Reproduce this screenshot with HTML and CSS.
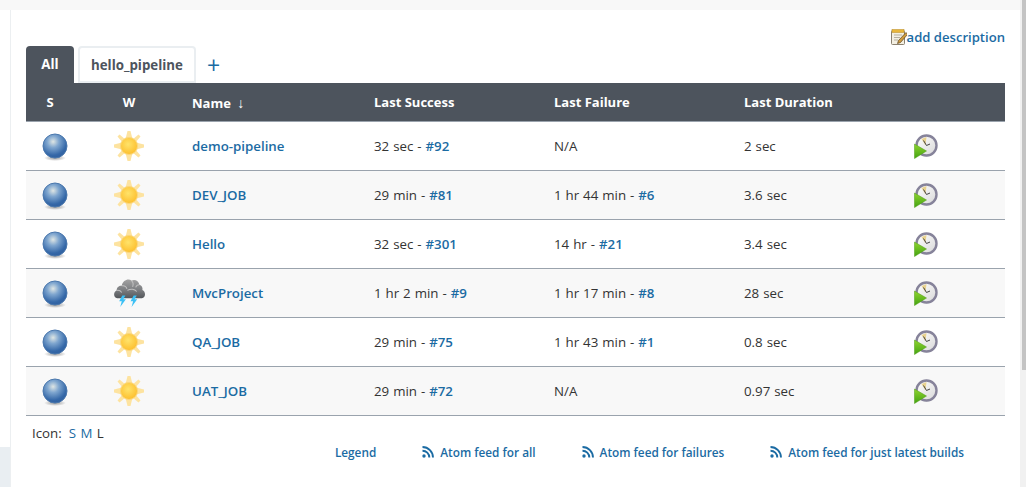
FILE: index.html
```html
<!DOCTYPE html>
<html>
<head>
	<title>Dashboard</title>
	<meta charset="utf-8"/>
	<link rel="stylesheet" href="styles.css">
</head>
<body>
	<svg class="defs" width="0" height="0">
		<defs>
			<radialGradient id="ball" cx="0.42" cy="0.32" r="0.7">
				<stop offset="0" stop-color="#dfe6e4"/>
				<stop offset="0.35" stop-color="#7fa6cf"/>
				<stop offset="0.8" stop-color="#3568a8"/>
				<stop offset="1" stop-color="#2f5f9e"/>
			</radialGradient>
			<radialGradient id="shade" cx="0.5" cy="0.5" r="0.5">
				<stop offset="0" stop-color="#555" stop-opacity="0.6"/>
				<stop offset="1" stop-color="#555" stop-opacity="0"/>
			</radialGradient>
			<radialGradient id="sunball" cx="0.45" cy="0.4" r="0.6">
				<stop offset="0" stop-color="#ffe36a"/>
				<stop offset="1" stop-color="#fdbf2e"/>
			</radialGradient>
			<linearGradient id="cloud" x1="0" y1="0" x2="0" y2="1">
				<stop offset="0" stop-color="#a2a2a2"/>
				<stop offset="0.55" stop-color="#7c7e81"/>
				<stop offset="1" stop-color="#54575b"/>
			</linearGradient>
			<linearGradient id="clockface" x1="0" y1="0" x2="1" y2="1">
				<stop offset="0" stop-color="#fff"/>
				<stop offset="1" stop-color="#d8d8d8"/>
			</linearGradient>
			<linearGradient id="arrowfill" x1="0" y1="0" x2="0" y2="1">
				<stop offset="0" stop-color="#8fd42e"/>
				<stop offset="1" stop-color="#43a312"/>
			</linearGradient>
			<symbol id="blue" viewBox="0 0 26 28">
				<ellipse cx="13" cy="25" rx="11" ry="3" fill="url(#shade)"/>
				<circle cx="13" cy="13" r="12" fill="url(#ball)" stroke="#4b78ad" stroke-width="1"/>
			</symbol>
			<symbol id="sun" viewBox="0 0 30 30">
				<g fill="#fde3a0">
					<path d="M13.500 0h3l2 8h-7z"/>
					<path d="M13.500 30h3l2-8h-7z"/>
					<path d="M0 13.500v3l8 2v-7z"/>
					<path d="M30 13.500v3l-8 2v-7z"/>
					<path d="M3.500 5.500l2-2 6 5-3 3z"/>
					<path d="M26.500 5.500l-2-2-6 5 3 3z"/>
					<path d="M3.500 24.500l2 2 6-5-3-3z"/>
					<path d="M26.500 24.500l-2 2-6-5 3-3z"/>
				</g>
				<circle cx="15" cy="15" r="8.500" fill="url(#sunball)" stroke="#fbd77c" stroke-width="1"/>
			</symbol>
			<symbol id="storm" viewBox="0 0 32 30">
				<path d="M4 20.500c-3.500-.5-4-6-.5-7.500 0-3.500 3-5 5-4.500C9.500 3 15 1 18 3.500c3-1.500 7 0 7.500 4 2.500.5 3.500 3 3 5 3.500 1.500 3.500 7.500-.5 8z" fill="url(#cloud)"/>
				<path d="M8.500 8.500c2.500-.5 4.500 1 5 3M18 3.500c1.500 1.500 2 3.500 1 6M25.500 7.500c-1.500 0-3 1-3.500 2.500M3.500 13c2-.5 4 .5 5 2M14 13c3-2 7-1.500 9 1" fill="none" stroke="#c0c0c0" stroke-width="1"/>
				<path d="M9 18l-3 5.500h2.500l-1.500 5.500 5.500-7.500h-2.500l2-3.500z" fill="#3cc0f5"/>
				<path d="M20 18l-3 5.500h2.500l-1.500 5.500 5.500-7.500h-2.500l2-3.500z" fill="#3cc0f5"/>
			</symbol>
			<symbol id="clock" viewBox="0 0 24 25">
				<circle cx="12.500" cy="12" r="10.500" fill="#000" opacity="0.15"/>
				<circle cx="12.500" cy="11.500" r="10" fill="url(#clockface)" stroke="#86839a" stroke-width="2.400"/>
				<path d="M12.500 3l-5 2 4 6.500z" fill="#e9d390"/>
				<path d="M12.500 11.500l-3-5M12.500 11.500l3.500-1.500" fill="none" stroke="#444" stroke-width="1"/>
				<path d="M0.500 10v14.500l12-7.500z" fill="url(#arrowfill)" stroke="#4d9a12" stroke-width="0.500"/>
			</symbol>
			<symbol id="note" viewBox="0 0 16 16">
				<rect x="0.500" y="1.500" width="13" height="14" rx="1" fill="#f3efe2" stroke="#8a8170"/>
				<rect x="1" y="0.500" width="12" height="3" fill="#e8b63a" stroke="#b98a20" stroke-width="0.500"/>
				<path d="M3 6h8M3 8.500h6M3 11h4" stroke="#b5b0a0" stroke-width="1"/>
				<path d="M15 3.500l-7.500 8-1 3 3-1 7-8z" fill="#cf9a3c" stroke="#5a4420" stroke-width="0.700"/>
			</symbol>
			<symbol id="rss" viewBox="0 0 12 12">
				<circle cx="2" cy="10" r="1.700" fill="currentColor"/>
				<path d="M0.500 4.700a6.800 6.800 0 0 1 6.800 6.800" fill="none" stroke="currentColor" stroke-width="1.900"/>
				<path d="M0.500 1a10.500 10.500 0 0 1 10.500 10.500" fill="none" stroke="currentColor" stroke-width="1.900"/>
			</symbol>
		</defs>
	</svg>

	<div class="page">
		<div class="content">
			<div class="topbar"></div>
			<div class="layout">
				<div class="sidebar">
					<div class="side-top"></div>
					<div class="side-bottom"></div>
				</div>
				<div class="main">
					<div class="description">
						<svg class="note"><use href="#note"/></svg><a href="#">add description</a>
					</div>
					<div class="tabs">
						<div class="tab active">All</div>
						<div class="tab">hello_pipeline</div>
						<div class="tab-add">+</div>
					</div>
					<table class="jobs">
						<thead>
							<tr>
								<th class="col-s">S</th>
								<th class="col-w">W</th>
								<th class="col-name">Name <span class="arrow">↓</span></th>
								<th class="col-success">Last Success</th>
								<th class="col-failure">Last Failure</th>
								<th class="col-duration">Last Duration</th>
								<th class="col-run"></th>
							</tr>
						</thead>
						<tbody>
							<tr>
								<td><svg class="ball"><use href="#blue"/></svg></td>
								<td class="col-w"><svg class="weather"><use href="#sun"/></svg></td>
								<td><a href="#" class="job">demo-pipeline</a></td>
								<td>32 sec - <a href="#">#92</a></td>
								<td>N/A</td>
								<td>2 sec</td>
								<td><svg class="run"><use href="#clock"/></svg></td>
							</tr>
							<tr>
								<td><svg class="ball"><use href="#blue"/></svg></td>
								<td class="col-w"><svg class="weather"><use href="#sun"/></svg></td>
								<td><a href="#" class="job">DEV_JOB</a></td>
								<td>29 min - <a href="#">#81</a></td>
								<td>1 hr 44 min - <a href="#">#6</a></td>
								<td>3.6 sec</td>
								<td><svg class="run"><use href="#clock"/></svg></td>
							</tr>
							<tr>
								<td><svg class="ball"><use href="#blue"/></svg></td>
								<td class="col-w"><svg class="weather"><use href="#sun"/></svg></td>
								<td><a href="#" class="job">Hello</a></td>
								<td>32 sec - <a href="#">#301</a></td>
								<td>14 hr - <a href="#">#21</a></td>
								<td>3.4 sec</td>
								<td><svg class="run"><use href="#clock"/></svg></td>
							</tr>
							<tr>
								<td><svg class="ball"><use href="#blue"/></svg></td>
								<td class="col-w"><svg class="weather storm"><use href="#storm"/></svg></td>
								<td><a href="#" class="job">MvcProject</a></td>
								<td>1 hr 2 min - <a href="#">#9</a></td>
								<td>1 hr 17 min - <a href="#">#8</a></td>
								<td>28 sec</td>
								<td><svg class="run"><use href="#clock"/></svg></td>
							</tr>
							<tr>
								<td><svg class="ball"><use href="#blue"/></svg></td>
								<td class="col-w"><svg class="weather"><use href="#sun"/></svg></td>
								<td><a href="#" class="job">QA_JOB</a></td>
								<td>29 min - <a href="#">#75</a></td>
								<td>1 hr 43 min - <a href="#">#1</a></td>
								<td>0.8 sec</td>
								<td><svg class="run"><use href="#clock"/></svg></td>
							</tr>
							<tr>
								<td><svg class="ball"><use href="#blue"/></svg></td>
								<td class="col-w"><svg class="weather"><use href="#sun"/></svg></td>
								<td><a href="#" class="job">UAT_JOB</a></td>
								<td>29 min - <a href="#">#72</a></td>
								<td>N/A</td>
								<td>0.97 sec</td>
								<td><svg class="run"><use href="#clock"/></svg></td>
							</tr>
						</tbody>
					</table>
					<div class="icon-size">Icon:&nbsp; <a href="#">S</a> <a href="#" class="size-gap">M</a> <span class="size-gap">L</span></div>
					<div class="feeds">
						<a href="#">Legend</a>
						<a href="#"><svg class="rss"><use href="#rss"/></svg>Atom feed for all</a>
						<a href="#"><svg class="rss"><use href="#rss"/></svg>Atom feed for failures</a>
						<a href="#"><svg class="rss"><use href="#rss"/></svg>Atom feed for just latest builds</a>
					</div>
				</div>
			</div>
		</div>
		<div class="track"><div class="thumb"></div></div>
	</div>
</body>
</html>
```

FILE: styles.css
```css
html, body{
	margin: 0;
	padding: 0;
	height: 100%;
	overflow: hidden;
}
body{
	background-color: #fff;
	color: #333;
	font-family: "Open Sans", "Noto Sans", sans-serif;
	font-size: 13.3px;
}
a{
	color: #1b6ba3;
	text-decoration: none;
}
.defs{
	display: block;
	height: 0;
}
.page{
	display: flex;
	height: 487px;
}
.content{
	width: 1020px;
}
.track{
	width: 6px;
	display: flex;
	justify-content: flex-end;
	background-color: #f1f1f1;
}
.thumb{
	width: 4px;
	height: 370px;
	background-color: #c4c4c4;
}
.topbar{
	height: 10px;
	background-color: #f8f8f8;
}
.layout{
	display: flex;
	height: 477px;
}
.sidebar{
	width: 10px;
	display: flex;
	flex-direction: column;
	border-right: 1px solid #eceff1;
}
.side-top{
	flex: 1;
	background-color: #fff;
}
.side-bottom{
	height: 40px;
	background-color: #e9eef2;
}
.main{
	width: 979px;
	padding-left: 15px;
}
.description{
	display: flex;
	justify-content: flex-end;
	align-items: center;
	height: 18px;
	margin-top: 18px;
	font-size: 13.1px;
	font-weight: 600;
}
.note{
	width: 16px;
	height: 16px;
}
.tabs{
	display: flex;
	height: 37px;
	font-weight: 700;
}
.tab{
	height: 37px;
	line-height: 34px;
	padding: 0 11px;
	margin-right: 4px;
	border: 2px solid #eaeef1;
	border-radius: 4px 4px 0 0;
	color: #4d545d;
	box-sizing: border-box;
}
.tab.active{
	width: 48px;
	line-height: 36px;
	padding: 0;
	text-align: center;
	background-color: #4d545d;
	border: 0;
	color: #fff;
}
.tab-add{
	font-size: 23px;
	font-weight: 400;
	color: #1b6ba3;
	margin-left: 7px;
	line-height: 38px;
}
.jobs{
	width: 979px;
	border-collapse: collapse;
	table-layout: fixed;
	word-spacing: 0.5px;
}
.jobs th{
	height: 38px;
	padding: 0;
	background-color: #4d545d;
	color: #fff;
	font-size: 13px;
	font-weight: 700;
	text-align: left;
	word-spacing: 0;
	border-bottom: 1px solid #9aa3ad;
}
.jobs td{
	height: 48px;
	padding: 0;
	border-bottom: 1px solid #9aa3ad;
}
.jobs td a{
	font-weight: 600;
}
.jobs tbody tr:nth-child(even){
	background-color: #f8f8f8;
}
.jobs svg{
	display: block;
}
.jobs .col-s{
	width: 48px;
	text-align: center;
}
.jobs .col-w{
	width: 110px;
	padding-right: 8px;
	text-align: center;
}
.col-name{
	width: 182px;
}
.col-success{
	width: 180px;
}
.col-failure{
	width: 190px;
}
.col-duration{
	width: 169px;
}
.arrow{
	font-size: 14px;
	margin-left: 3px;
}
.ball{
	width: 26px;
	height: 28px;
	margin: 2px 0 0 16px;
}
.weather{
	width: 30px;
	height: 30px;
	margin: 0 auto;
}
.weather.storm{
	width: 33px;
	height: 31px;
	margin-top: -2px;
}
.run{
	width: 24px;
	height: 25px;
	margin-left: 1px;
}
.icon-size{
	margin: 8px 0 0 6px;
}
.size-gap{
	margin-left: 1px;
}
.feeds{
	display: flex;
	justify-content: flex-end;
	gap: 46px;
	margin: 2px 41px 0 0;
	font-size: 11.8px;
	font-weight: 600;
}
.rss{
	width: 12px;
	height: 12px;
	margin-right: 6px;
	vertical-align: -1px;
}
```
